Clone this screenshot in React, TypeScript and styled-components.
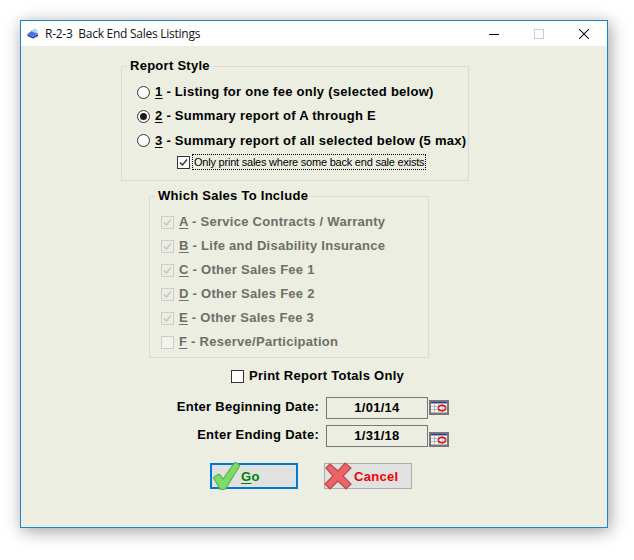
import React from "react";
import styled, { createGlobalStyle } from "styled-components";

const Global = createGlobalStyle`
  html, body { margin: 0; padding: 0; background: #fff; }
  body { width: 634px; height: 560px; overflow: hidden; font-family: "Liberation Sans", Arial, sans-serif; }
`;
const Page = styled.div`padding: 20px 0 0 20px;`;
const Win = styled.div`
  width: 586px; height: 506px; border: 1px solid #1883d7; background: #ebeee0;
  box-shadow: 2px 3px 16px rgba(0,0,0,.38); display: flex; flex-direction: column;
`;
const TitleBar = styled.div`
  height: 25px; background: #fff; display: flex; align-items: center; padding-left: 6px;
`;
const TitleText = styled.span`
  font: 12px/16px "Open Sans", sans-serif; color: #111; margin-left: 6px; white-space: pre; flex: 1; letter-spacing: -.26px;
`;
const Controls = styled.div`display: flex; align-items: center; gap: 35px; padding-right: 18px;`;
const Body = styled.div`flex: 1; display: flex; flex-direction: column; align-items: flex-start; padding-top: 12px;`;
const Group = styled.fieldset<{ $left: number; $width: number; $height: number; $top?: number; $inset: number }>`
  margin: ${p => p.$top ?? 0}px 0 0 ${p => p.$left}px; padding: ${p => p.$inset}px 0 0; box-sizing: border-box;
  width: ${p => p.$width}px; height: ${p => p.$height}px; border: 1px solid #d9dbd5; min-width: 0;
  display: block;
`;
const Legend = styled.legend`
  margin-left: 5px; padding: 0 3px; font: bold 13px/16px "Liberation Sans", sans-serif;
  color: #000; letter-spacing: .27px; height: 16px;
`;
const Option = styled.div<{ $h?: number; $pl: number }>`
  display: flex; align-items: center; height: ${p => p.$h ?? 24}px; padding-left: ${p => p.$pl}px;
  box-sizing: border-box;
`;
const Label = styled.span<{ $off?: boolean; $gap: number }>`
  font: bold 13px/16px "Liberation Sans", sans-serif; letter-spacing: .27px; margin-left: ${p => p.$gap}px;
  color: ${p => (p.$off ? "#6d6f6a" : "#000")}; white-space: nowrap;
  u { text-underline-offset: 2px; }
`;
const Radio = styled.span<{ $on?: boolean }>`
  width: 13px; height: 13px; border-radius: 50%; border: 1px solid #333; background: #fff; box-sizing: border-box;
  display: flex; align-items: center; justify-content: center; flex: none;
  &::after { content: ""; width: 7px; height: 7px; border-radius: 50%; background: ${p => (p.$on ? "#1a1a1a" : "transparent")}; }
`;
const Box = styled.span<{ $off?: boolean; $blank?: boolean }>`
  width: 13px; height: 13px; box-sizing: border-box; flex: none; display: flex;
  border: 1px solid ${p => (p.$off ? "#cccccc" : "#333")};
  background: ${p => (p.$off && !p.$blank ? "#ebeee0" : p.$off ? "#f2f3ec" : "#fff")};
`;
const Small = styled.span`
  font: 11px/14px "Liberation Sans", sans-serif; letter-spacing: -.22px; color: #000; margin-left: 3px; padding: 0 1px;
  outline: 1px dotted #000; outline-offset: 0; white-space: nowrap; height: 14px;
`;
const Totals = styled(Option)`margin-top: 6px;`;
const DateRow = styled.div<{ $top: number }>`
  display: grid; grid-template-columns: 168px 102px 20px; column-gap: 7px; align-items: center;
  margin: ${p => p.$top}px 0 0 130px;
`;
const DateLabel = styled.span`
  font: bold 13px/16px "Liberation Sans", sans-serif; letter-spacing: .27px; text-align: right; color: #000; white-space: nowrap;
  padding-bottom: 2px;
`;
const DateField = styled.div`
  height: 22px; box-sizing: border-box; border: 1px solid #777; background: #ebeee0;
  font: bold 13px/20px "Liberation Sans", sans-serif; letter-spacing: .27px; text-align: center; color: #000;
`;
const CalSlot = styled.span<{ $down?: number; $up?: number }>`
  display: flex; margin-left: -6px; padding-top: ${p => p.$down ?? 0}px; padding-bottom: ${p => p.$up ?? 0}px;
`;
const Actions = styled.div`display: flex; gap: 26px; margin: 16px 0 0 189px;`;
const Btn = styled.div<{ $focus?: boolean }>`
  width: 88px; height: 26px; box-sizing: border-box; background: #e1e1e1; display: flex; align-items: center; overflow: visible;
  border: ${p => (p.$focus ? "2px solid #0078d7" : "1px solid #adadad")};
`;
const BtnText = styled.span<{ $color: string; $gap: number }>`
  font: bold 13px/16px "Liberation Sans", sans-serif; letter-spacing: .3px; color: ${p => p.$color}; margin-left: ${p => p.$gap}px;
  padding-top: 2px;
  u { text-underline-offset: 2px; }
`;
const BtnIcon = styled.svg`flex: none; overflow: visible;`;

const Check = ({ c = "#333" }: { c?: string }) => (
  <svg width="11" height="11" viewBox="0 0 11 11"><path d="M2 5.5 L4.4 8 L9 2.5" fill="none" stroke={c} strokeWidth="1.4" /></svg>
);
const Calendar = () => (
  <svg width="20" height="15" viewBox="0 0 20 15">
    <rect x="1" y="1" width="18" height="13" fill="#f6f6f6" stroke="#777" strokeWidth="2" />
    <rect x="2" y="2" width="16" height="1.4" fill="#1c3f94" />
    <path d="M2 6.5H18M2 9.5H18M2 12.5H18M5.5 4V13M9.5 4V13M13.5 4V13" stroke="#b8b8b8" strokeWidth="1" />
    <ellipse cx="13" cy="8" rx="3.6" ry="2.8" fill="none" stroke="#e01010" strokeWidth="1.5" />
  </svg>
);
const AppIcon = () => (
  <svg width="12" height="11" viewBox="0 0 12 11">
    <path d="M0.5 6 L6 9 L11 6 L11 8 L6 10.5 L0.5 8 Z" fill="#2a2fa8" />
    <path d="M0.5 6 L5 2.5 L11 5.5 L6 9 Z" fill="#4c6fe0" />
    <path d="M4 3 L7.5 0.5 L11 2.5 L8 5 Z" fill="#a9dbe8" />
  </svg>
);

const sales: [string, string, boolean][] = [
  ["A", " - Service Contracts / Warranty", true],
  ["B", " - Life and Disability Insurance", true],
  ["C", " - Other Sales Fee 1", true],
  ["D", " - Other Sales Fee 2", true],
  ["E", " - Other Sales Fee 3", true],
  ["F", " - Reserve/Participation", false],
];

export default function App() {
  return (
    <>
      <Global />
      <Page>
        <Win>
          <TitleBar>
            <AppIcon />
            <TitleText>R-2-3  Back End Sales Listings</TitleText>
            <Controls>
              <svg width="10" height="10" viewBox="0 0 10 10"><path d="M0 5.5H10" stroke="#000" /></svg>
              <svg width="10" height="10" viewBox="0 0 10 10"><rect x=".5" y=".5" width="9" height="9" fill="none" stroke="#ccc" /></svg>
              <svg width="10" height="10" viewBox="0 0 10 10"><path d="M0 0L10 10M10 0L0 10" stroke="#111" strokeWidth="1.05" /></svg>
            </Controls>
          </TitleBar>
          <Body>
            <Group $left={100} $width={348} $height={123} $inset={6}>
              <Legend>Report Style</Legend>
              <Option $pl={15}><Radio /><Label $gap={5}><u>1</u> - Listing for one fee only (selected below)</Label></Option>
              <Option $pl={15}><Radio $on /><Label $gap={5}><u>2</u> - Summary report of A through E</Label></Option>
              <Option $pl={15} $h={25}><Radio /><Label $gap={5}><u>3</u> - Summary report of all selected below (5 max)</Label></Option>
              <Option $pl={55} $h={18}><Box><Check /></Box><Small>Only print sales where some back end sale exists</Small></Option>
            </Group>
            <Group $left={128} $width={280} $height={170} $top={7} $inset={6}>
              <Legend>Which Sales To Include</Legend>
              {sales.map(([k, t, on]) => (
                <Option key={k} $pl={11}>
                  <Box $off $blank={!on}>{on && <Check c="#c6c6c6" />}</Box>
                  <Label $off $gap={5}><u>{k}</u>{t}</Label>
                </Option>
              ))}
            </Group>
            <Totals $pl={210}><Box /><Label $gap={5}>Print Report Totals Only</Label></Totals>
            <DateRow $top={9}>
              <DateLabel>Enter Beginning Date:</DateLabel>
              <DateField>1/01/14</DateField>
              <CalSlot $up={2}><Calendar /></CalSlot>
            </DateRow>
            <DateRow $top={6}>
              <DateLabel>Enter Ending Date:</DateLabel>
              <DateField>1/31/18</DateField>
              <CalSlot $down={6}><Calendar /></CalSlot>
            </DateRow>
            <Actions>
              <Btn $focus>
                <BtnIcon width="28" height="28" viewBox="0 0 28 28">
                  <path d="M1.5 16 Q2 14.5 3.5 14 L6 12.5 Q7 12 8 13 L11 17 L22 1.5 Q23 0 24.5 1 L27 2.5 Q28 3.5 27 5 L14 26 Q13 27.5 11 27.5 L9.5 27.5 Q8 27.5 7.5 26 Z" fill="#7ddc63" stroke="#5fb04a" strokeWidth="1.2" />
                </BtnIcon>
                <BtnText $color="#008000" $gap={1}><u>G</u>o</BtnText>
              </Btn>
              <Btn>
                <BtnIcon width="26" height="26" viewBox="0 0 26 26">
                  <path d="M1 5 L5 1 L13 8 L20 0 L26 5 L18 13 L26 21 L21 26 L13 18 L5 26 L0 21 L8 13 Z" fill="#e8666a" stroke="#c44448" strokeWidth="1.2" />
                </BtnIcon>
                <BtnText $color="#f00000" $gap={3}>Cancel</BtnText>
              </Btn>
            </Actions>
          </Body>
        </Win>
      </Page>
    </>
  );
}
